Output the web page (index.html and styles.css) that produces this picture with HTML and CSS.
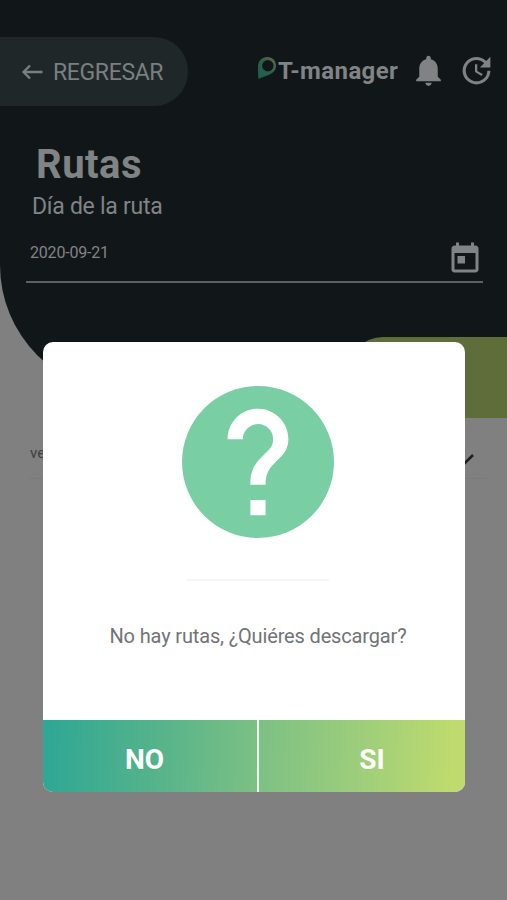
FILE: index.html
```html
<!DOCTYPE html>
<html lang="es">
<head>
<meta charset="utf-8">
<title>T-manager</title>
<link rel="stylesheet" href="styles.css">
</head>
<body>
<main class="screen">
  <header class="header">
    <div class="topbar">
      <div class="back">
        <svg class="back-arrow" viewBox="0 0 22 16"><path d="M21 8H2.500M8.500 1.500L2 8l6.500 6.500"/></svg>
        <span class="back-text">REGRESAR</span>
      </div>
      <div class="brand">
        <svg class="pin" viewBox="0 0 20 24">
          <defs><linearGradient id="pin" x1="0" y1="1" x2="1" y2="0"><stop offset="0" stop-color="#176152"/><stop offset=".5" stop-color="#2e5f49"/><stop offset="1" stop-color="#666b40"/></linearGradient></defs>
          <path fill="url(#pin)" fill-rule="evenodd" d="M1.500 23C1 19 1 14 1 10.500C1 5 5 1 10.300 1C15.500 1 19 4.800 19 9.800C19 14 16.500 16.800 12.500 18.500C8.500 20.200 5 21 1.500 23zM10.800 4a5.700 5.700 0 1 0 0 11.400a5.700 5.700 0 0 0 0-11.400z"/>
        </svg>
        <span class="brand-text">T-manager</span>
      </div>
      <svg class="icon bell" viewBox="0 0 24 24"><path d="M12 22c1.100 0 2-.9 2-2h-4c0 1.100.89 2 2 2zm6-6v-5c0-3.070-1.640-5.640-4.500-6.320V4c0-.83-.67-1.500-1.500-1.500s-1.500.67-1.500 1.500v.68C7.630 5.360 6 7.920 6 11v5l-2 2v1h16v-1l-2-2z"/></svg>
      <svg class="icon update" viewBox="0 0 24 24"><path d="M21 10.120h-6.780l2.740-2.820c-2.730-2.700-7.150-2.800-9.880-.1-2.730 2.710-2.730 7.080 0 9.790s7.150 2.710 9.880 0C18.320 15.650 19 14.080 19 12.100h2c0 1.980-.88 4.550-2.640 6.290-3.510 3.480-9.210 3.480-12.720 0-3.500-3.470-3.530-9.110-.02-12.580s9.140-3.470 12.650 0L21 3v7.120zM12.500 8v4.250l3.500 2.080-.72 1.210L11 13V8h1.500z"/></svg>
    </div>
    <h1 class="title">Rutas</h1>
    <p class="label">Día de la ruta</p>
    <div class="date-field">
      <span class="date">2020-09-21</span>
      <svg class="calendar" viewBox="0 0 24 24"><path d="M19 3h-1V1h-2v2H8V1H6v2H5c-1.110 0-1.990.9-1.990 2L3 19c0 1.100.89 2 2 2h14c1.100 0 2-.9 2-2V5c0-1.100-.9-2-2-2zm0 16H5V8h14v11zM7 10h5v5H7z"/></svg>
    </div>
  </header>
  <div class="accent"></div>
  <div class="select">
    <span>ve</span>
    <svg class="chevron" viewBox="0 0 20 12"><path d="M2 2l8 8 8-8"/></svg>
  </div>

  <section class="dialog">
    <div class="dialog-body">
      <svg class="question" viewBox="2 2 20 20">
        <circle class="disc" cx="12" cy="12" r="10"/>
        <path class="mark" d="M13 19h-2v-2h2v2zm2.070-7.750l-.9.920C13.450 12.900 13 13.500 13 15h-2v-.5c0-1.100.45-2.100 1.170-2.830l1.240-1.260c.37-.36.59-.86.59-1.410 0-1.100-.9-2-2-2s-2 .9-2 2H8c0-2.210 1.790-4 4-4s4 1.790 4 4c0 .88-.36 1.680-.93 2.250z"/>
      </svg>
      <div class="divider"></div>
      <p class="message">No hay rutas, ¿Quiéres descargar?</p>
    </div>
    <div class="actions">
      <div class="action no">NO</div>
      <div class="action yes">SI</div>
    </div>
  </section>
</main>
</body>
</html>
```

FILE: styles.css
```css
* { box-sizing: border-box; }
body { margin: 0; font-family: Roboto, "Liberation Sans", sans-serif; }
h1, p { margin: 0; }
svg { display: block; flex: none; }

.screen {
  position: relative;
  width: 507px;
  height: 900px;
  overflow: hidden;
  background: #808080;
  color: #818485;
}

.header {
  height: 393px;
  padding-top: 37px;
  background: #111618;
  border-bottom-left-radius: 128px;
}
.topbar { display: flex; height: 69px; }
.back {
  display: flex;
  align-items: center;
  width: 188px;
  padding-left: 21px;
  background: #1f2728;
  border-radius: 0 34px 34px 0;
}
.back-arrow {
  width: 23px;
  height: 16px;
  margin-right: 9px;
  fill: none;
  stroke: #7b7f80;
  stroke-width: 2.3;
}
.back-text { padding-top: 2px; color: #7b7f80; font-size: 23px; line-height: 28px; letter-spacing: -0.35px; }
.brand { display: flex; width: 142px; margin-left: 69px; padding-top: 19px; }
.pin { width: 20px; height: 24px; }
.brand-text {
  margin-left: 1px;
  font-size: 24px;
  font-weight: 700;
  line-height: 30px;
  letter-spacing: 0.4px;
}
.icon { width: 37px; height: 37px; margin-top: 15px; fill: #808283; }
.bell { margin-left: 11px; }
.update { margin-left: 11px; }

.title {
  margin: 35px 0 0 36px;
  font-size: 40px;
  font-weight: 700;
  line-height: 48px;
  letter-spacing: 0.5px;
}
.label { margin: 4px 0 0 32px; font-size: 23px; line-height: 28px; letter-spacing: -0.27px; }
.date-field {
  display: flex;
  justify-content: space-between;
  height: 42px;
  margin: 20px 24px 0 26px;
  padding-left: 4px;
  border-bottom: 2px solid #5d6061;
}
.date { margin-top: 2px; font-size: 16px; line-height: 20px; letter-spacing: -0.2px; }
.calendar { width: 36px; height: 36px; fill: #818485; }

.accent {
  position: relative;
  width: 160px;
  height: 81px;
  margin: -56px 0 0 auto;
  background: #5f6d3b;
  border-top-left-radius: 36px;
}
.select {
  display: flex;
  justify-content: space-between;
  height: 61px;
  margin: 0 20px 0 28px;
  padding: 26px 12px 0 2px;
  border-bottom: 1px solid #7b7b7b;
  color: #3d3f40;
  font-size: 15px;
  line-height: 18px;
}
.chevron { width: 20px; height: 12px; margin-top: 9px; fill: none; stroke: #1b1d1e; stroke-width: 2.5; }

.dialog {
  position: absolute;
  left: 43px;
  top: 342px;
  display: flex;
  flex-direction: column;
  width: 422px;
  height: 450px;
  overflow: hidden;
  background: #fff;
  border-radius: 10px;
}
.dialog-body {
  display: flex;
  flex-direction: column;
  align-items: center;
  height: 378px;
  padding-top: 43.500px;
  padding-left: 8px;
}
.question { width: 152px; height: 152px; }
.disc { fill: #79cfa3; }
.mark { fill: #fff; }
.divider { width: 142px; height: 2px; margin-top: 41px; background: #f6f6f6; }
.message { margin-top: 43px; color: #707476; font-size: 20px; line-height: 25px; letter-spacing: -0.15px; }
.actions {
  display: flex;
  height: 72px;
  background: linear-gradient(93deg, #2fa795 1%, #55b38b 27%, #7ec184 52%, #a3d079 79%, #bfdb6d 97%);
}
.action {
  display: flex;
  align-items: center;
  justify-content: center;
  padding-top: 6px;
  color: #fff;
  font-size: 28px;
  font-weight: 700;
}
.no { width: 216px; padding-right: 11px; border-right: 2px solid #f3faf2; }
.yes { width: 206px; padding-left: 20px; }
```
